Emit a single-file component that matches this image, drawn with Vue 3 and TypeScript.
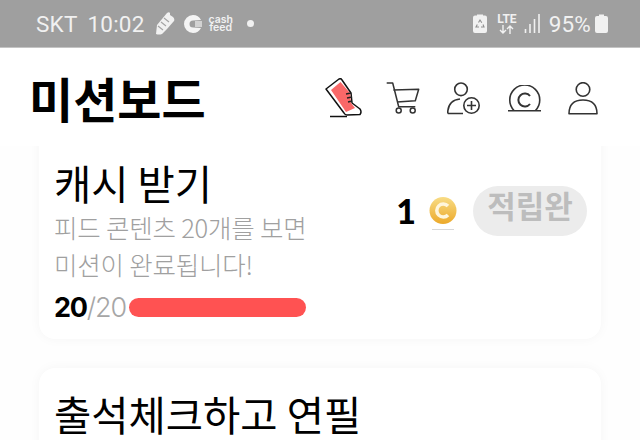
<script setup lang="ts">
const done = 20;
const total = 20;
const barWidth = `${(done / total) * 177}px`;
</script>

<template>
	<div class="screen">
		<div class="status">
			<div class="status-left">
				<span class="carrier">SKT</span>
				<span class="clock">10:02</span>
				<svg width="20" height="23" viewBox="0 0 20 23">
					<path d="M1 22 L2 13 L12 1 Q14 -0.500 15 1 L15 3 L18 5 Q20 7 19 9 L12 17 L7 22 Q4 23 1 22 Z" fill="#f1f1f1" />
					<path d="M3 14 L8 18 M6 10 L11 14 M9 6 L14 10" stroke="#a5a5a5" stroke-width="1.200" fill="none" />
				</svg>
				<svg class="st-c" width="18" height="18" viewBox="0 0 18 18">
					<path d="M9 0 A9 9 0 1 0 9 18 A9 9 0 0 0 17 13 L9 12.500 A3.500 3.500 0 1 1 9 5.500 L17 5 A9 9 0 0 0 9 0 Z" fill="#f4f4f4" />
					<rect x="11" y="6" width="7" height="6" fill="#d2d2d2" />
				</svg>
				<span class="cashfeed">cash<br />feed</span>
				<span class="dot"></span>
			</div>
			<div class="status-right">
				<svg width="14" height="19" viewBox="0 0 14 19">
					<path d="M4 1.500 V0.500 H10 V1.500 H12 Q14 1.500 14 3.500 V17 Q14 19 12 19 H2 Q0 19 0 17 V3.500 Q0 1.500 2 1.500 Z" fill="#f1f1f1" />
					<path d="M5.500 8.500 L7 6 L8.800 8.800 M10 10.500 L11 13 H8 M6 13 H3 L4.300 10.500" stroke="#8f8f8f" stroke-width="1.100" fill="none" />
				</svg>
				<div class="lte">
					<span>LTE</span>
					<svg width="17" height="9" viewBox="0 0 17 9">
						<path d="M5 0 V8 M2 5 L5 8 L8 5 M12 9 V1 M9 4 L12 1 L15 4" stroke="#f1f1f1" stroke-width="1.400" fill="none" />
					</svg>
				</div>
				<svg class="signal" width="17" height="19" viewBox="0 0 17 19">
					<path d="M1.500 15 V19 M6 10 V19 M10.500 5 V19 M15 0 V19" stroke="#f1f1f1" stroke-width="1.600" />
				</svg>
				<span class="pct">95%</span>
				<svg class="batt" width="13" height="19" viewBox="0 0 13 19">
					<path d="M4 0.500 H9 V2 H11 Q13 2 13 4 V17 Q13 19 11 19 H2 Q0 19 0 17 V4 Q0 2 2 2 H4 Z" fill="#f1f1f1" />
				</svg>
			</div>
		</div>

		<header class="top">
			<h1>미션보드</h1>
			<div class="icons">
				<svg class="shoe" width="37" height="40" viewBox="0 0 37 40">
					<path d="M1 11 L14 1 Q16 0 17 2 L26 15 L27 25 L35 31 Q37 34 35 36.500 L22 37 Q20 37 19 35 Z" fill="#fff" stroke="#111" stroke-width="1.500" stroke-linejoin="round" />
					<path d="M6 12 L15.500 4 L25 15 L26 25 L30 30 L21 34 Z" fill="#f96868" />
					<path d="M21 16 L26 15 M22 20 L27 19 M23 24 L27 23" stroke="#222" stroke-width="1.300" />
					<path d="M5 38.500 H22" stroke="#111" stroke-width="1.500" />
				</svg>
				<svg width="34" height="32" viewBox="0 0 34 32">
					<path d="M0.700 1 H6.700 L12.700 24.700 H29.300 M7.300 8 L32.700 7.300 L29.300 18.700 L11 20" fill="none" stroke="#333" stroke-width="1.500" stroke-linejoin="round" />
					<circle cx="12.700" cy="28.500" r="2.500" fill="none" stroke="#333" stroke-width="1.500" />
					<circle cx="26.700" cy="28.500" r="2.500" fill="none" stroke="#333" stroke-width="1.500" />
				</svg>
				<svg width="33" height="33" viewBox="0 0 33 33">
					<circle cx="14" cy="7.300" r="6.300" fill="none" stroke="#333" stroke-width="1.600" />
					<path d="M0.800 31.500 V29 Q2 18 13 17 M0.800 31.500 H16" fill="none" stroke="#333" stroke-width="1.600" />
					<circle cx="24.500" cy="23.500" r="7.700" fill="#fff" stroke="#333" stroke-width="1.600" />
					<path d="M24.500 19 V28 M20 23.500 H29" stroke="#333" stroke-width="1.600" />
				</svg>
				<svg width="33" height="27" viewBox="0 0 33 27">
					<path d="M6 25.500 A15 15 0 1 1 27.500 25.500" fill="none" stroke="#333" stroke-width="1.600" />
					<path d="M0 25.700 H33" stroke="#333" stroke-width="1.600" />
					<path d="M22 11 A6.500 6.500 0 1 0 22 19" fill="none" stroke="#333" stroke-width="2" />
				</svg>
				<svg width="30" height="33" viewBox="0 0 30 33">
					<circle cx="15" cy="7.500" r="6.800" fill="none" stroke="#333" stroke-width="1.600" />
					<path d="M1 31.800 Q1 18 15 18 Q29 18 29 31.800 Z" fill="none" stroke="#333" stroke-width="1.600" stroke-linejoin="round" />
				</svg>
			</div>
		</header>

		<main class="list">
			<section class="card first">
				<div class="info">
					<h2>캐시 받기</h2>
					<p>피드 콘텐츠 20개를 보면<br />미션이 완료됩니다!</p>
					<div class="progress">
						<span class="count"><b>{{ done }}</b>/{{ total }}</span>
						<span class="bar" :style="{ width: barWidth }"></span>
					</div>
				</div>
				<div class="reward">
					<span class="amount">1</span>
					<svg class="coin" width="30" height="34" viewBox="0 0 30 34">
						<defs>
							<linearGradient id="coinFill" x1="0" y1="0" x2="0" y2="1">
								<stop offset="0" stop-color="#f8dc85" />
								<stop offset="1" stop-color="#eca92a" />
							</linearGradient>
						</defs>
						<circle cx="15" cy="13.500" r="13.500" fill="url(#coinFill)" />
						<path d="M20 9 A6.500 6.500 0 1 0 20 18" fill="none" stroke="#fff6dc" stroke-width="3.500" />
						<path d="M4 32.500 H26" stroke="#d8d8d8" stroke-width="1" />
					</svg>
					<span class="pill">적립완</span>
				</div>
			</section>

			<section class="card second">
				<div class="info">
					<h2>출석체크하고 연필</h2>
				</div>
			</section>
		</main>
	</div>
</template>

<style scoped>
.screen {
	width: 640px;
	height: 440px;
	overflow: hidden;
	background: #fefefe;
	font-family: 'Noto Sans CJK KR', 'Noto Sans', sans-serif;
	display: flex;
	flex-direction: column;
}

.status {
	height: 48px;
	flex: none;
	box-sizing: border-box;
	background: #9f9f9f;
	border-bottom: 1px solid #c4c4c4;
	padding: 0 32px 0 36px;
	display: flex;
	align-items: center;
	justify-content: space-between;
	color: #f1f1f1;
	font-family: Roboto, 'Liberation Sans', sans-serif;
}

.status-left,
.status-right {
	display: flex;
	align-items: center;
}

.carrier,
.clock,
.pct {
	font-size: 22.5px;
	letter-spacing: 0.2px;
}

.carrier {
	margin-right: 10px;
}

.clock {
	margin-right: 10px;
}

.st-c {
	margin-left: 9px;
}

.cashfeed {
	margin-left: 7px;
	width: 24px;
	font: 600 10.5px/8px Inter, sans-serif;
	text-align: center;
}

.dot {
	width: 7px;
	height: 7px;
	border-radius: 50%;
	background: #f1f1f1;
	margin-left: 14px;
}

.lte {
	display: flex;
	flex-direction: column;
	align-items: center;
	margin-left: 10px;
	font: 700 12px/11px Roboto, sans-serif;
}

.signal {
	margin-left: 7px;
}

.pct {
	margin-left: 8px;
}

.batt {
	margin-left: 4px;
}

.top {
	height: 98px;
	flex: none;
	background: #fff;
	display: flex;
	align-items: center;
	justify-content: space-between;
	padding: 0 42px 0 29px;
	position: relative;
	z-index: 1;
}

h1 {
	margin: 0;
	font-size: 48px;
	font-weight: 700;
	line-height: 1;
	color: #000;
}

.icons {
	display: flex;
	align-items: center;
	gap: 27.5px;
	margin-top: 2px;
}

.shoe {
	margin-right: -4px;
}

.list {
	display: flex;
	flex-direction: column;
	gap: 29px;
	padding: 0 39px;
	margin-top: -24px;
}

.card {
	background: #fff;
	border-radius: 16px;
	box-shadow: 0 0 12px rgba(0, 0, 0, 0.04);
	padding: 0 14px 0 15px;
	display: flex;
	justify-content: space-between;
	flex: none;
}

.first {
	height: 217px;
	padding-top: 36px;
	box-sizing: border-box;
}

.second {
	height: 200px;
	padding-top: 21px;
	box-sizing: border-box;
}

h2 {
	margin: 0;
	font-size: 40.5px;
	font-weight: 400;
	line-height: 50px;
	color: #000;
}

p {
	margin: 0;
	font-size: 25.5px;
	line-height: 37px;
	font-weight: 300;
	letter-spacing: -0.2px;
	color: #a0a0a0;
}

.progress {
	display: flex;
	align-items: center;
	gap: 3px;
	margin-top: 7px;
	height: 36px;
}

.count {
	font: 300 27px/1 Inter, sans-serif;
	letter-spacing: -1.2px;
	color: #a6a6a6;
}

.count b {
	font-weight: 700;
	color: #000;
}

.bar {
	height: 19px;
	border-radius: 10px;
	background: #ff5252;
}

.reward {
	display: flex;
	align-items: center;
	height: 50px;
	margin-top: 28px;
}

.amount {
	font: 900 34px/1 Lato, sans-serif;
	color: #000;
}

.coin {
	margin-left: 12px;
	margin-top: 6px;
}

.pill {
	margin-left: 15px;
	width: 114px;
	height: 50px;
	border-radius: 25px;
	background: #ececec;
	color: #bdbdbd;
	font-size: 31px;
	font-weight: 700;
	line-height: 38px;
	text-align: center;
}
</style>

<style>
html,
body {
	margin: 0;
	background: #fefefe;
}
</style>
